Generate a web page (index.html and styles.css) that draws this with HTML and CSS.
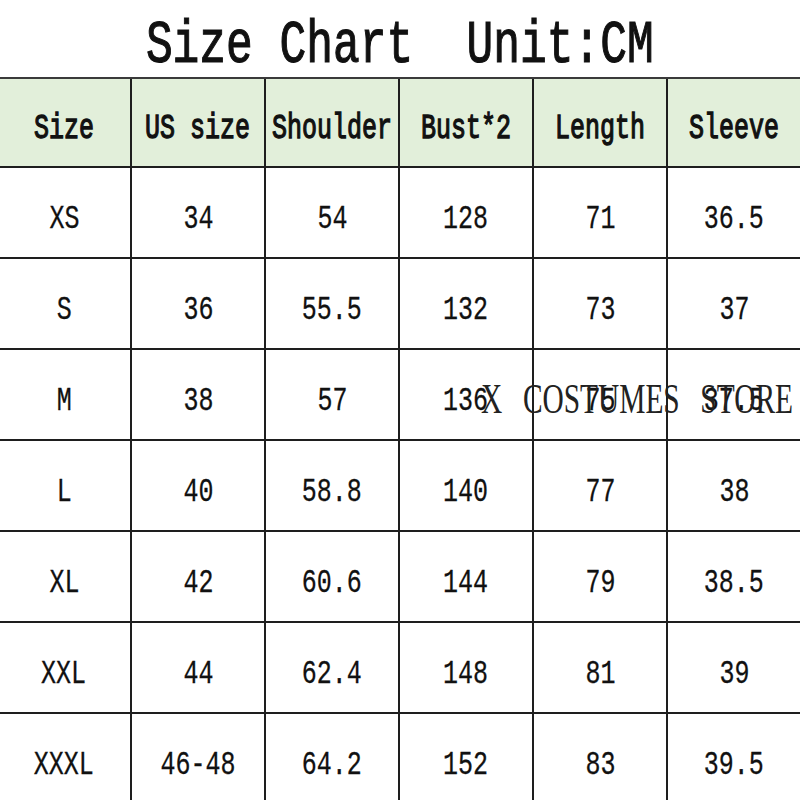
FILE: index.html
```html
<!DOCTYPE html>
<html>
<head>
<meta charset="utf-8">
<link rel="stylesheet" href="styles.css">
</head>
<body>
<div class="page">
  <h1 class="title"><span class="squeeze">Size Chart  Unit:CM</span></h1>
  <div class="chart">
    <div class="cell head"><span class="squeeze">Size</span></div>
    <div class="cell head"><span class="squeeze">US size</span></div>
    <div class="cell head"><span class="squeeze">Shoulder</span></div>
    <div class="cell head"><span class="squeeze">Bust*2</span></div>
    <div class="cell head"><span class="squeeze">Length</span></div>
    <div class="cell head"><span class="squeeze">Sleeve</span></div>

    <div class="cell"><span class="squeeze">XS</span></div>
    <div class="cell"><span class="squeeze">34</span></div>
    <div class="cell"><span class="squeeze">54</span></div>
    <div class="cell"><span class="squeeze">128</span></div>
    <div class="cell"><span class="squeeze">71</span></div>
    <div class="cell"><span class="squeeze">36.5</span></div>

    <div class="cell"><span class="squeeze">S</span></div>
    <div class="cell"><span class="squeeze">36</span></div>
    <div class="cell"><span class="squeeze">55.5</span></div>
    <div class="cell"><span class="squeeze">132</span></div>
    <div class="cell"><span class="squeeze">73</span></div>
    <div class="cell"><span class="squeeze">37</span></div>

    <div class="cell"><span class="squeeze">M</span></div>
    <div class="cell"><span class="squeeze">38</span></div>
    <div class="cell"><span class="squeeze">57</span></div>
    <div class="cell"><span class="squeeze">136</span></div>
    <div class="cell"><span class="squeeze">75</span></div>
    <div class="cell"><span class="squeeze">37.5</span></div>

    <div class="cell"><span class="squeeze">L</span></div>
    <div class="cell"><span class="squeeze">40</span></div>
    <div class="cell"><span class="squeeze">58.8</span></div>
    <div class="cell"><span class="squeeze">140</span></div>
    <div class="cell"><span class="squeeze">77</span></div>
    <div class="cell"><span class="squeeze">38</span></div>

    <div class="cell"><span class="squeeze">XL</span></div>
    <div class="cell"><span class="squeeze">42</span></div>
    <div class="cell"><span class="squeeze">60.6</span></div>
    <div class="cell"><span class="squeeze">144</span></div>
    <div class="cell"><span class="squeeze">79</span></div>
    <div class="cell"><span class="squeeze">38.5</span></div>

    <div class="cell"><span class="squeeze">XXL</span></div>
    <div class="cell"><span class="squeeze">44</span></div>
    <div class="cell"><span class="squeeze">62.4</span></div>
    <div class="cell"><span class="squeeze">148</span></div>
    <div class="cell"><span class="squeeze">81</span></div>
    <div class="cell"><span class="squeeze">39</span></div>

    <div class="cell"><span class="squeeze">XXXL</span></div>
    <div class="cell"><span class="squeeze">46-48</span></div>
    <div class="cell"><span class="squeeze">64.2</span></div>
    <div class="cell"><span class="squeeze">152</span></div>
    <div class="cell"><span class="squeeze">83</span></div>
    <div class="cell"><span class="squeeze">39.5</span></div>
  </div>
  <div class="watermark"><span class="wm-text">X COSTUMES STORE</span></div>
</div>
</body>
</html>
```

FILE: styles.css
```css
html, body {
  margin: 0;
  padding: 0;
  background: #ffffff;
}

body {
  width: 800px;
  height: 800px;
  overflow: hidden;
}

.page {
  position: relative;
  width: 800px;
  height: 800px;
  overflow: hidden;
  color: #111111;
  font-family: "Liberation Mono", "DejaVu Sans Mono", monospace;
}

.squeeze {
  display: inline-block;
  white-space: pre;
  transform: scaleX(0.735);
  transform-origin: center;
}

.title {
  margin: 0;
  height: 77px;
  box-sizing: border-box;
  padding-top: 15px;
  font-size: 61px;
  font-weight: normal;
  line-height: 1;
  text-align: center;
  -webkit-text-stroke: 1.2px #111111;
}

.title .squeeze {
  transform: scaleX(0.73);
}

.chart {
  display: grid;
  grid-template-columns: repeat(6, 134px);
  grid-template-rows: 89px repeat(7, 91px);
  margin-left: -2px;
  border-top: 2px solid #3a3a3a;
}

.cell {
  box-sizing: border-box;
  border-right: 2px solid #1e1e1e;
  border-bottom: 2px solid #1e1e1e;
  display: flex;
  align-items: center;
  justify-content: center;
  padding-top: 12px;
  font-size: 34px;
  line-height: 1;
  -webkit-text-stroke: 0.3px #111111;
}

.cell.head {
  background: #e2efda;
  font-size: 35px;
  font-weight: normal;
  padding-top: 14px;
  -webkit-text-stroke: 1.3px #111111;
}

.cell.head .squeeze {
  transform: scaleX(0.714);
}

.watermark {
  position: absolute;
  left: 481px;
  top: 378px;
  font-family: "Liberation Serif", "Times New Roman", serif;
  font-size: 42px;
  line-height: 1;
  color: #222222;
  white-space: pre;
}

.wm-text {
  display: inline-block;
  transform: scaleX(0.7);
  transform-origin: left center;
  word-spacing: 19px;
}
```
